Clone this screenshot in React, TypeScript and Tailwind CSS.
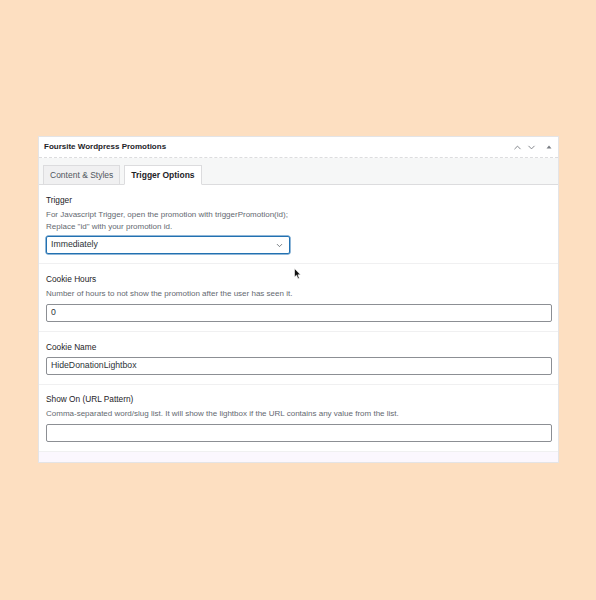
import { ChevronDown, ChevronUp } from 'lucide-react';

const font = { fontFamily: '"Liberation Sans", Arial, sans-serif' };

function Field({
  label,
  desc,
  children,
  className = '',
}: {
  label: string;
  desc?: React.ReactNode;
  children: React.ReactNode;
  className?: string;
}) {
  return (
    <div className={`border-b border-[#f0f0f1] pr-[6px] pl-[7px] ${className}`}>
      <div className="text-[8.3px] leading-[10px] font-medium text-[#1d2327]">{label}</div>
      {desc && <div className="mt-[4px] text-[8px] leading-[12px] text-[#646970]">{desc}</div>}
      {children}
    </div>
  );
}

export default function App() {
  return (
    <div className="relative h-[600px] w-[596px] bg-[#fddfc1] pt-[136px] pl-[38px]" style={font}>
      <div className="w-[521px] border border-[#e4e4e6] bg-white">
        {/* header */}
        <div className="flex h-[21px] items-center justify-between border-b border-dashed border-[#dcdcde] pr-[4px] pl-[5px]">
          <span className="text-[8px] font-bold text-[#1d2327]">Foursite Wordpress Promotions</span>
          <div className="flex items-center gap-[3px] text-[#787c82]">
            <ChevronUp size={11} strokeWidth={2} />
            <ChevronDown size={11} strokeWidth={2} />
            <svg width="10" height="10" viewBox="0 0 10 10" className="ml-[4px]">
              <path d="M2.5 6.5 L5 3.5 L7.5 6.5 Z" fill="#787c82" />
            </svg>
          </div>
        </div>
        {/* tabs */}
        <div className="flex h-[27px] items-end gap-[4px] border-b border-[#dcdcde] bg-[#f6f7f7] pl-[4px]">
          <div className="-mb-px flex h-[20px] items-center border border-[#dcdcde] bg-[#f0f0f1] px-[6px] text-[8.5px] font-medium text-[#50575e]">
            Content &amp; Styles
          </div>
          <div className="-mb-px flex h-[20px] items-center border border-b-white border-[#dcdcde] bg-white px-[6px] text-[8.5px] font-bold text-[#1d2327]">
            Trigger Options
          </div>
        </div>
        {/* fields */}
        <Field
          label="Trigger"
          className="pt-[10px] pb-[9px]"
          desc={
            <>
              For Javascript Trigger, open the promotion with triggerPromotion(id);
              <br />
              Replace "id" with your promotion id.
            </>
          }
        >
          <div className="mt-[3px] flex h-[18px] w-[244px] items-center justify-between rounded-[2px] border border-[#2271b1] pr-[5px] pl-[4px] text-[8.7px] text-[#2c3338] shadow-[0_0_0_0.5px_#2271b1]">
            <span>Immediately</span>
            <ChevronDown size={9} strokeWidth={2} className="text-[#50575e]" />
          </div>
        </Field>
        <Field
          label="Cookie Hours"
          className="pt-[10px] pb-[9px]"
          desc="Number of hours to not show the promotion after the user has seen it."
        >
          <div className="mt-[4px] flex h-[18px] items-center rounded-[2px] border border-[#8c8f94] px-[4px] text-[8.7px] text-[#2c3338]">
            0
          </div>
        </Field>
        <Field label="Cookie Name" className="pt-[10px] pb-[9px]">
          <div className="mt-[5px] flex h-[18px] items-center rounded-[2px] border border-[#8c8f94] px-[4px] text-[8.7px] text-[#2c3338]">
            HideDonationLightbox
          </div>
        </Field>
        <Field
          label="Show On (URL Pattern)"
          className="pt-[9px] pb-[9px]"
          desc="Comma-separated word/slug list. It will show the lightbox if the URL contains any value from the list."
        >
          <div className="mt-[4px] h-[18px] rounded-[2px] border border-[#8c8f94]"></div>
        </Field>
        <div className="h-[10px] bg-[#fbf7fe]"></div>
      </div>
      {/* mouse cursor */}
      <svg className="absolute top-[268px] left-[294px]" width="8" height="12" viewBox="0 0 8 12">
        <path d="M0.5 0.5 L0.5 9 L2.5 7.2 L4 10.8 L5.3 10.2 L3.9 6.8 L6.5 6.8 Z" fill="#111" stroke="#fff" strokeWidth="0.6" />
      </svg>
    </div>
  );
}
